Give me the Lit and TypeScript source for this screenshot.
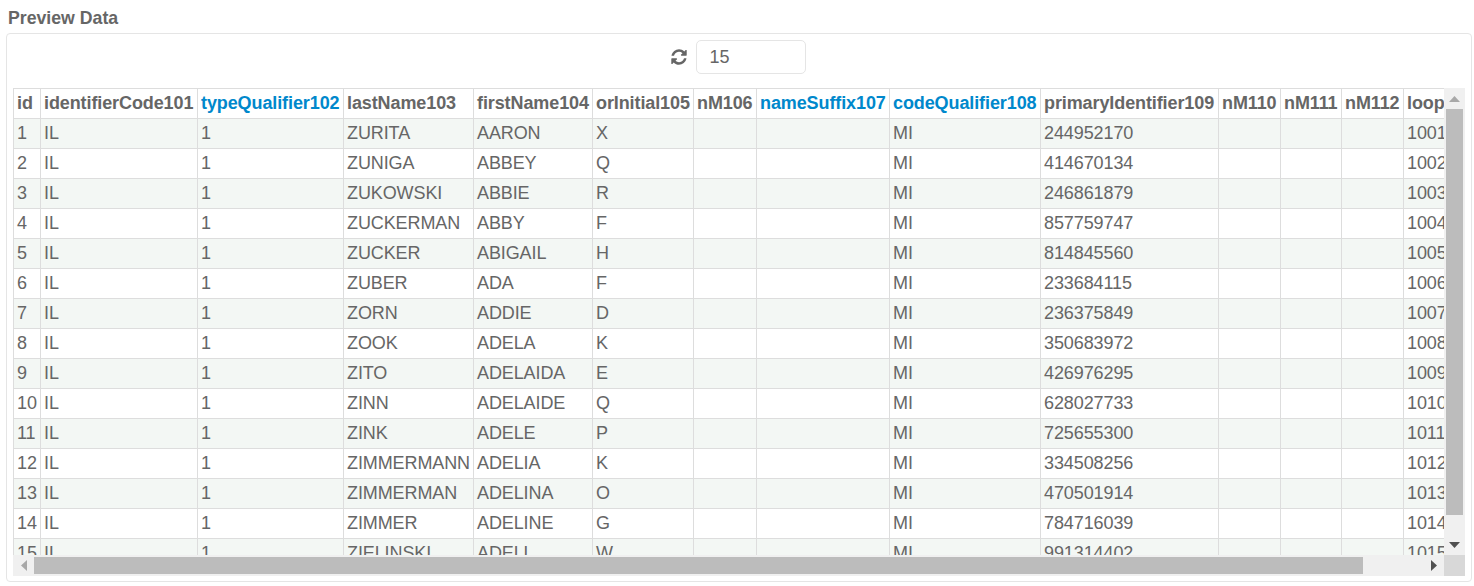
import { LitElement, html, css } from "lit";
import { customElement } from "lit/decorators.js";

const columns: [string, boolean, number][] = [
  ["id", false, 27], ["identifierCode101", false, 157], ["typeQualifier102", true, 146], ["lastName103", false, 130],
  ["firstName104", false, 119], ["orInitial105", false, 101], ["nM106", false, 63], ["nameSuffix107", true, 133],
  ["codeQualifier108", true, 151], ["primaryIdentifier109", false, 178], ["nM110", false, 62], ["nM111", false, 61],
  ["nM112", false, 62], ["loop113", false, 80],
];
const tableWidth = columns.reduce((sum, c) => sum + c[2], 0);

const people: [string, string, string, string][] = [
  ["ZURITA", "AARON", "X", "244952170"],
  ["ZUNIGA", "ABBEY", "Q", "414670134"],
  ["ZUKOWSKI", "ABBIE", "R", "246861879"],
  ["ZUCKERMAN", "ABBY", "F", "857759747"],
  ["ZUCKER", "ABIGAIL", "H", "814845560"],
  ["ZUBER", "ADA", "F", "233684115"],
  ["ZORN", "ADDIE", "D", "236375849"],
  ["ZOOK", "ADELA", "K", "350683972"],
  ["ZITO", "ADELAIDA", "E", "426976295"],
  ["ZINN", "ADELAIDE", "Q", "628027733"],
  ["ZINK", "ADELE", "P", "725655300"],
  ["ZIMMERMANN", "ADELIA", "K", "334508256"],
  ["ZIMMERMAN", "ADELINA", "O", "470501914"],
  ["ZIMMER", "ADELINE", "G", "784716039"],
  ["ZIELINSKI", "ADELL", "W", "991314402"],
];

@customElement("app-root")
export class AppRoot extends LitElement {
  static styles = css`
    :host {
      display: block;
      font-family: "Liberation Sans", Arial, sans-serif;
      color: #666;
      background: #fff;
      height: 586px;
      box-sizing: border-box;
      padding: 8px 2px 4px 6px;
    }
    .title {
      font-size: 17.7px;
      font-weight: bold;
      line-height: 20px;
      height: 25px;
      padding-left: 2px;
      color: #666;
    }
    .panel {
      box-sizing: border-box;
      height: 549px;
      border: 1px solid #e5e5e5;
      border-radius: 4px;
      padding: 6px 6px 5px 6px;
      display: flex;
      flex-direction: column;
    }
    .toolbar {
      height: 34px;
      margin-bottom: 14px;
      padding-right: 2px;
      display: flex;
      justify-content: center;
      align-items: center;
      gap: 9px;
      flex: none;
    }
    .refresh {
      width: 16px;
      height: 18px;
      fill: #666;
      display: block;
    }
    .count {
      box-sizing: border-box;
      width: 110px;
      height: 34px;
      border: 1px solid #e5e5e5;
      border-radius: 5px;
      padding: 0 13px;
      font: 18px "Liberation Sans", Arial, sans-serif;
      color: #666;
      background: #fff;
      outline: none;
    }
    .view {
      flex: 1;
      min-height: 0;
      display: grid;
      grid-template-columns: minmax(0, 1fr) 21px;
      grid-template-rows: minmax(0, 1fr) 21px;
    }
    .clip {
      overflow: hidden;
    }
    table {
      border-collapse: collapse;
      table-layout: fixed;
      white-space: nowrap;
      font-size: 18px;
    }
    th, td {
      border: 1px solid #ddd;
      height: 30px;
      padding: 0 3px;
      text-align: left;
      box-sizing: border-box;
      overflow: hidden;
      letter-spacing: -0.1px;
    }
    th { font-weight: bold; color: #666; }
    th.link { color: #0088cc; }
    tbody tr:nth-child(odd) td { background: #f3f7f4; }
    .vbar, .hbar {
      background: #f0f0f0;
      display: flex;
    }
    .vbar {
      flex-direction: column;
      align-items: center;
    }
    .hbar {
      align-items: center;
    }
    .corner { background: #d8d8d8; }
    .btn {
      flex: none;
      display: flex;
      align-items: center;
      justify-content: center;
    }
    .vbar .btn { width: 21px; height: 21px; }
    .hbar .btn { width: 21px; height: 21px; }
    .btn svg { display: block; }
    .vthumb {
      width: 17px;
      height: 406px;
      background: #bcbcbc;
      flex: none;
    }
    .vgap { flex: 1; }
    .hthumb {
      height: 17px;
      width: 1329px;
      background: #bcbcbc;
      flex: none;
    }
  `;

  render() {
    return html`
      <div class="title">Preview Data</div>
      <div class="panel">
        <div class="toolbar">
          <svg class="refresh" viewBox="0 0 1536 1792" aria-hidden="true">
            <path d="M1511 1056q0 5-1 7-64 268-268 434.5t-478 166.5q-146 0-282.5-55t-243.5-157l-129 129q-19 19-45 19t-45-19-19-45v-448q0-26 19-45t45-19h448q26 0 45 19t19 45-19 45l-137 137q71 66 161 102t187 36q134 0 250-65t186-179q11-17 53-117 8-23 30-23h192q13 0 22.5 9.5t9.5 22.5zm25-800v448q0 26-19 45t-45 19h-448q-26 0-45-19t-19-45 19-45l138-138q-148-137-349-137-134 0-250 65t-186 179q-11 17-53 117-8 23-30 23h-199q-13 0-22.5-9.5t-9.5-22.5v-7q65-268 270-434.5t480-166.5q146 0 284 55.5t245 156.5l130-129q19-19 45-19t45 19 19 45z" />
          </svg>
          <input class="count" type="text" .value=${"15"} />
        </div>
        <div class="view">
          <div class="clip">
            <table style="width:${tableWidth}px">
              <colgroup>
                ${columns.map(([, , width]) => html`<col style="width:${width}px" />`)}
              </colgroup>
              <thead>
                <tr>
                  ${columns.map(([name, link]) => html`<th class=${link ? "link" : ""}>${name}</th>`)}
                </tr>
              </thead>
              <tbody>
                ${people.map(
                  ([last, first, initial, pid], i) => html`
                    <tr>
                      <td>${i + 1}</td>
                      <td>IL</td>
                      <td>1</td>
                      <td>${last}</td>
                      <td>${first}</td>
                      <td>${initial}</td>
                      <td></td>
                      <td></td>
                      <td>MI</td>
                      <td>${pid}</td>
                      <td></td>
                      <td></td>
                      <td></td>
                      <td>${1001 + i}</td>
                    </tr>
                  `,
                )}
              </tbody>
            </table>
          </div>
          <div class="vbar">
            <div class="btn">
              <svg width="11" height="6" viewBox="0 0 11 6"><path d="M5.5 0L11 6H0z" fill="#a8a8a8" /></svg>
            </div>
            <div class="vthumb"></div>
            <div class="vgap"></div>
            <div class="btn">
              <svg width="11" height="6" viewBox="0 0 11 6"><path d="M0 0h11L5.5 6z" fill="#505050" /></svg>
            </div>
          </div>
          <div class="hbar">
            <div class="btn">
              <svg width="6" height="11" viewBox="0 0 6 11"><path d="M6 0v11L0 5.5z" fill="#a8a8a8" /></svg>
            </div>
            <div class="hthumb"></div>
            <div class="vgap"></div>
            <div class="btn">
              <svg width="6" height="11" viewBox="0 0 6 11"><path d="M0 0l6 5.5L0 11z" fill="#505050" /></svg>
            </div>
          </div>
          <div class="corner"></div>
        </div>
      </div>
    `;
  }
}
